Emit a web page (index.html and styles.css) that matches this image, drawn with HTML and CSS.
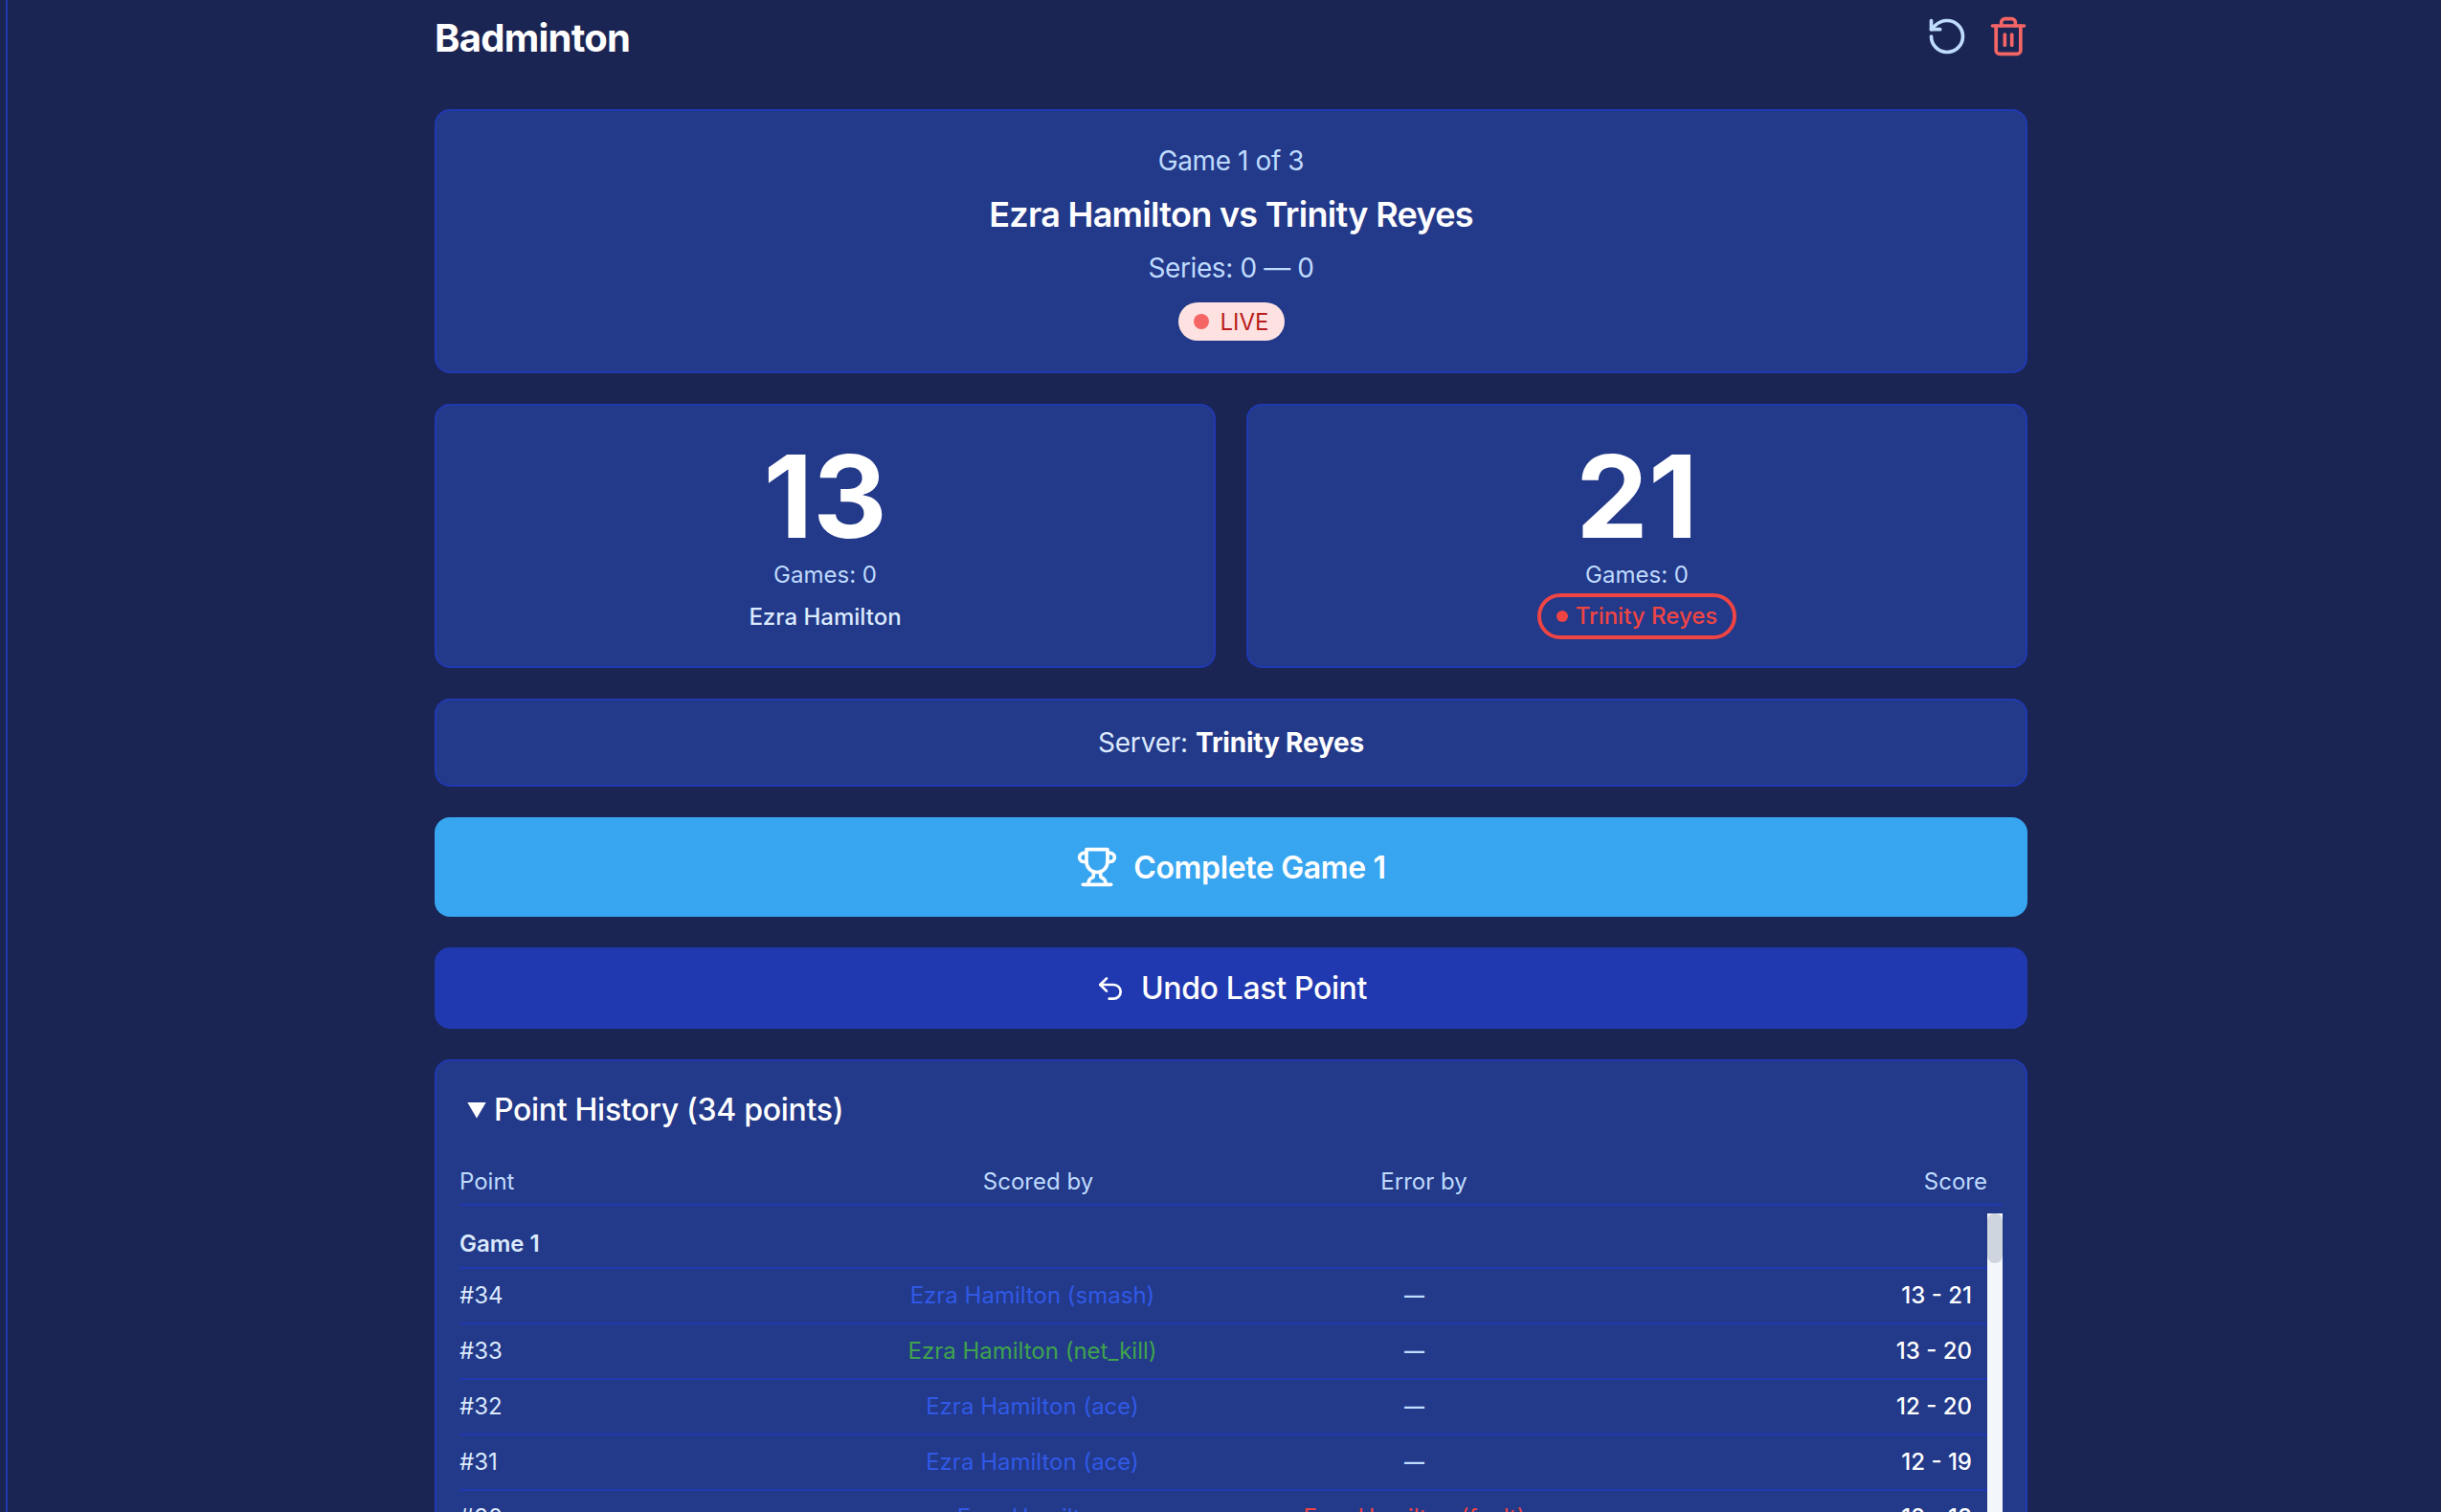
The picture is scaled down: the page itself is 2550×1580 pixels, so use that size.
FILE: index.html
```html
<!DOCTYPE html>
<html lang="en">
<head>
    <meta charset="UTF-8">
    <meta name="viewport" content="width=device-width, initial-scale=1.0">
    <title>Badminton</title>
    <link rel="stylesheet" href="styles.css">
</head>
<body>
    <div class="rail"></div>
    <div class="page">
        <header class="top-bar">
            <h1>Badminton</h1>
            <div class="top-actions">
                <svg class="icon icon-reset" viewBox="0 0 24 24"><path d="M3 12a9 9 0 1 0 9-9 9.75 9.75 0 0 0-6.74 2.74L3 8"/><path d="M3 3v5h5"/></svg>
                <svg class="icon icon-delete" viewBox="0 0 24 24"><path d="M3 6h18"/><path d="M19 6v14c0 1-1 2-2 2H7c-1 0-2-1-2-2V6"/><path d="M8 6V4c0-1 1-2 2-2h4c1 0 2 1 2 2v2"/><path d="M10 11v6"/><path d="M14 11v6"/></svg>
            </div>
        </header>

        <section class="card match-info">
            <div class="game-label">Game 1 of 3</div>
            <h2>Ezra Hamilton vs Trinity Reyes</h2>
            <div class="series">Series: 0 — 0</div>
            <span class="live-badge"><span class="live-dot"></span>LIVE</span>
        </section>

        <section class="scores">
            <div class="card score-card">
                <div class="score">13</div>
                <div class="games">Games: 0</div>
                <div class="player">Ezra Hamilton</div>
            </div>
            <div class="card score-card">
                <div class="score">21</div>
                <div class="games">Games: 0</div>
                <div class="player player-serving"><span class="serve-dot"></span>Trinity Reyes</div>
            </div>
        </section>

        <section class="card server-info">Server: <strong>Trinity Reyes</strong></section>

        <button class="btn btn-complete">
            <svg class="icon" viewBox="0 0 24 24"><path d="M6 9H4.5a2.5 2.5 0 0 1 0-5H6"/><path d="M18 9h1.5a2.5 2.5 0 0 0 0-5H18"/><path d="M4 22h16"/><path d="M10 14.66V17c0 .55-.47.98-.97 1.21C7.85 18.75 7 20.24 7 22"/><path d="M14 14.66V17c0 .55.47.98.97 1.21C16.15 18.75 17 20.24 17 22"/><path d="M18 2H6v7a6 6 0 0 0 12 0V2Z"/></svg>
            Complete Game 1
        </button>

        <button class="btn btn-undo">
            <svg class="icon" viewBox="0 0 24 24"><path d="M9 14 4 9l5-5"/><path d="M4 9h10.5a5.5 5.5 0 0 1 0 11H11"/></svg>
            Undo Last Point
        </button>

        <details class="card history" open>
            <summary>Point History (34 points)</summary>
            <div class="history-head">
                <div>Point</div>
                <div class="center">Scored by</div>
                <div class="center">Error by</div>
                <div class="right">Score</div>
            </div>
            <div class="history-body">
                <div class="history-rows">
                    <div class="group-row">Game 1</div>
                    <div class="row">
                        <div>#34</div>
                        <div class="center scored-smash">Ezra Hamilton (smash)</div>
                        <div class="center none">—</div>
                        <div class="right total">13 - 21</div>
                    </div>
                    <div class="row">
                        <div>#33</div>
                        <div class="center scored-kill">Ezra Hamilton (net_kill)</div>
                        <div class="center none">—</div>
                        <div class="right total">13 - 20</div>
                    </div>
                    <div class="row">
                        <div>#32</div>
                        <div class="center scored-smash">Ezra Hamilton (ace)</div>
                        <div class="center none">—</div>
                        <div class="right total">12 - 20</div>
                    </div>
                    <div class="row">
                        <div>#31</div>
                        <div class="center scored-smash">Ezra Hamilton (ace)</div>
                        <div class="center none">—</div>
                        <div class="right total">12 - 19</div>
                    </div>
                    <div class="row">
                        <div>#30</div>
                        <div class="center scored-smash">Ezra Hamilton</div>
                        <div class="center error">Ezra Hamilton (fault)</div>
                        <div class="right total">12 - 18</div>
                    </div>
                </div>
                <div class="scroll-track"><div class="scroll-thumb"></div></div>
            </div>
        </details>
    </div>
</body>
</html>
```

FILE: styles.css
```css
html, body {
    margin: 0;
    padding: 0;
    height: 100%;
    overflow: hidden;
    font-family: Inter, "Liberation Sans", sans-serif;
    background-color: #1a2553;
    color: #ffffff;
}
body {
    display: flex;
}
.rail {
    width: 2px;
    margin-left: 6px;
    background-color: #2139b0;
    flex-shrink: 0;
}
.page {
    width: 1664px;
    height: 100vh;
    overflow: hidden;
    margin-left: 446px;
    flex-shrink: 0;
    display: flex;
    flex-direction: column;
    gap: 32px;
}
.page > * {
    flex-shrink: 0;
}
.top-bar {
    display: flex;
    justify-content: space-between;
    align-items: center;
    height: 76px;
    margin-bottom: 6px;
}
h1 {
    font-size: 40px;
    line-height: 48px;
    font-weight: 700;
    letter-spacing: -0.75px;
    margin: 4px 0 0;
}
.top-actions {
    display: flex;
    gap: 20px;
    margin-right: -2px;
}
.icon {
    width: 44px;
    height: 44px;
    fill: none;
    stroke: currentColor;
    stroke-width: 2;
    stroke-linecap: round;
    stroke-linejoin: round;
    flex-shrink: 0;
}
.icon-reset {
    color: #bfdbfe;
}
.icon-delete {
    color: #f56565;
}
.card {
    background-color: #233989;
    border: 2px solid #2139b0;
    border-radius: 16px;
    box-sizing: border-box;
}
.match-info {
    height: 276px;
    padding-top: 32px;
    text-align: center;
}
.game-label, .series {
    font-size: 28px;
    line-height: 40px;
    letter-spacing: -0.4px;
    color: #bfdbfe;
}
h2 {
    font-size: 36px;
    line-height: 48px;
    font-weight: 600;
    letter-spacing: -0.7px;
    margin: 12px 0;
}
.series {
    margin-bottom: 16px;
}
.live-badge {
    display: inline-flex;
    align-items: center;
    gap: 12px;
    height: 40px;
    padding: 0 16px;
    border-radius: 20px;
    background-color: #fee2e2;
    color: #b91c1c;
    font-size: 24px;
    font-weight: 400;
}
.live-dot {
    width: 16px;
    height: 16px;
    border-radius: 50%;
    background-color: #f56565;
}
.scores {
    display: grid;
    grid-template-columns: 1fr 1fr;
    gap: 32px;
}
.score-card {
    height: 276px;
    padding-top: 35px;
    text-align: center;
}
.score {
    font-size: 120px;
    line-height: 120px;
    font-weight: 700;
}
.games {
    font-size: 24px;
    line-height: 32px;
    color: #bfdbfe;
    margin-top: 6px;
}
.player {
    font-size: 24px;
    line-height: 32px;
    font-weight: 500;
    color: #dbeafe;
    margin-top: 12px;
}
.player-serving {
    display: inline-flex;
    align-items: center;
    gap: 8px;
    height: 48px;
    box-sizing: border-box;
    margin-top: 3px;
    padding: 0 16px;
    border: 4px solid #ef4444;
    border-radius: 24px;
    color: #ef4444;
}
.serve-dot {
    width: 12px;
    height: 12px;
    border-radius: 50%;
    background-color: #ef4444;
}
.server-info {
    height: 92px;
    display: flex;
    align-items: center;
    justify-content: center;
    gap: 8px;
    font-size: 28px;
    letter-spacing: -0.2px;
    color: #dbeafe;
}
.server-info strong {
    color: #ffffff;
    font-weight: 700;
}
.btn {
    display: flex;
    align-items: center;
    justify-content: center;
    gap: 16px;
    width: 100%;
    border: none;
    border-radius: 16px;
    color: #ffffff;
    font-family: inherit;
    font-size: 32px;
    letter-spacing: -0.35px;
}
.btn-complete {
    height: 104px;
    background-color: #38a5f0;
    font-weight: 600;
}
.btn-undo {
    height: 85px;
    background-color: #2139b0;
    font-weight: 500;
}
.btn-undo .icon {
    width: 32px;
    height: 32px;
}
.history {
    padding: 23px 24px 24px;
    height: 640px;
}
summary {
    display: flex;
    align-items: center;
    list-style: none;
    font-size: 32px;
    line-height: 40px;
    font-weight: 500;
    letter-spacing: -0.3px;
    padding: 8px;
    margin-bottom: 31px;
}
summary::-webkit-details-marker {
    display: none;
}
summary::before {
    content: "";
    width: 20px;
    height: 17px;
    margin-right: 8px;
    background-color: #ffffff;
    clip-path: polygon(0 0, 100% 0, 50% 100%);
}
.history-head, .row {
    display: grid;
    grid-template-columns: repeat(4, 1fr);
    font-size: 24px;
    line-height: 32px;
    color: #bfdbfe;
}
.history-head {
    padding-bottom: 7px;
    border-bottom: 2px solid #2139b0;
    margin-bottom: 8px;
}
.history-head .right {
    padding-right: 16px;
}
.history-body {
    display: flex;
    height: 560px;
}
.history-rows {
    flex: 1;
}
.scroll-track {
    width: 16px;
    background-color: #f3f6fb;
}
.scroll-thumb {
    height: 52px;
    background-color: #cfd5de;
    border-radius: 8px;
}
.group-row {
    font-size: 24px;
    line-height: 32px;
    font-weight: 600;
    color: #dbeafe;
    padding: 16px 0 8px;
    border-bottom: 2px solid #2139b0;
}
.row {
    padding: 12px 0;
    border-bottom: 2px solid #2139b0;
    color: #dbeafe;
}
.center {
    text-align: center;
}
.right {
    text-align: right;
}
.row .right {
    padding-right: 16px;
}
.scored-smash {
    color: #3159e6;
}
.scored-kill {
    color: #3fa34d;
}
.error {
    color: #ef4444;
}
.row .none {
    color: #bfdbfe;
    font-size: 21px;
    font-weight: 600;
}
.row .total {
    color: #ffffff;
    font-weight: 500;
}
```
